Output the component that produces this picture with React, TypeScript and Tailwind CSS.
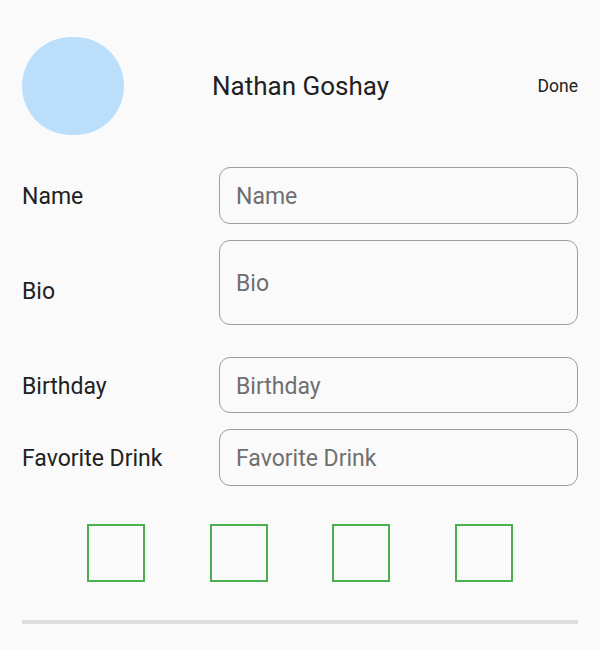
import React from "react";

const fields = [
  { label: "Name", h: "h-[57px]", extra: "" },
  { label: "Bio", h: "h-[85px]", extra: "pb-[16px]" },
  { label: "Birthday", h: "h-[56px]", extra: "" },
  { label: "Favorite Drink", h: "h-[57px]", extra: "" },
];

const App = () => {
  return (
    <div className="min-h-[650px] bg-[#fafafa] px-[22px] pt-[37px] font-['Roboto',sans-serif] text-[#212121]">
      {/* header */}
      <div className="flex items-center">
        <div className="h-[98px] w-[102px] rounded-full bg-[#bbdefb]" />
        <div className="ml-[88px] flex-1 pt-[1px] text-[26px]">Nathan Goshay</div>
        <button className="pt-[1px] text-[17.5px]">Done</button>
      </div>

      {/* form */}
      <div className="mt-[32px] flex flex-col gap-[16px]">
        {fields.map((f) => (
          <div key={f.label} className="flex items-center">
            <label className="w-[197px] pt-[4px] text-[23px]">{f.label}</label>
            <div className={`flex-1 ${f.extra}`}>
              <input
                placeholder={f.label}
                className={`${f.h} w-full rounded-[11px] border-[1.5px] border-[#9e9e9e] bg-transparent px-[16px] pt-[2px] text-[23px] outline-none placeholder:text-[#6f6f6f]`}
              />
            </div>
          </div>
        ))}
      </div>

      <div className="mt-[38px] flex justify-evenly">
        <div className="h-[58px] w-[58px] border-2 border-[#4caf50]" />
        <div className="h-[58px] w-[58px] border-2 border-[#4caf50]" />
        <div className="h-[58px] w-[58px] border-2 border-[#4caf50]" />
        <div className="h-[58px] w-[58px] border-2 border-[#4caf50]" />
      </div>

      <div className="mt-[38px] h-[4px] bg-[#dedede]" />
    </div>
  );
};

export default App;
